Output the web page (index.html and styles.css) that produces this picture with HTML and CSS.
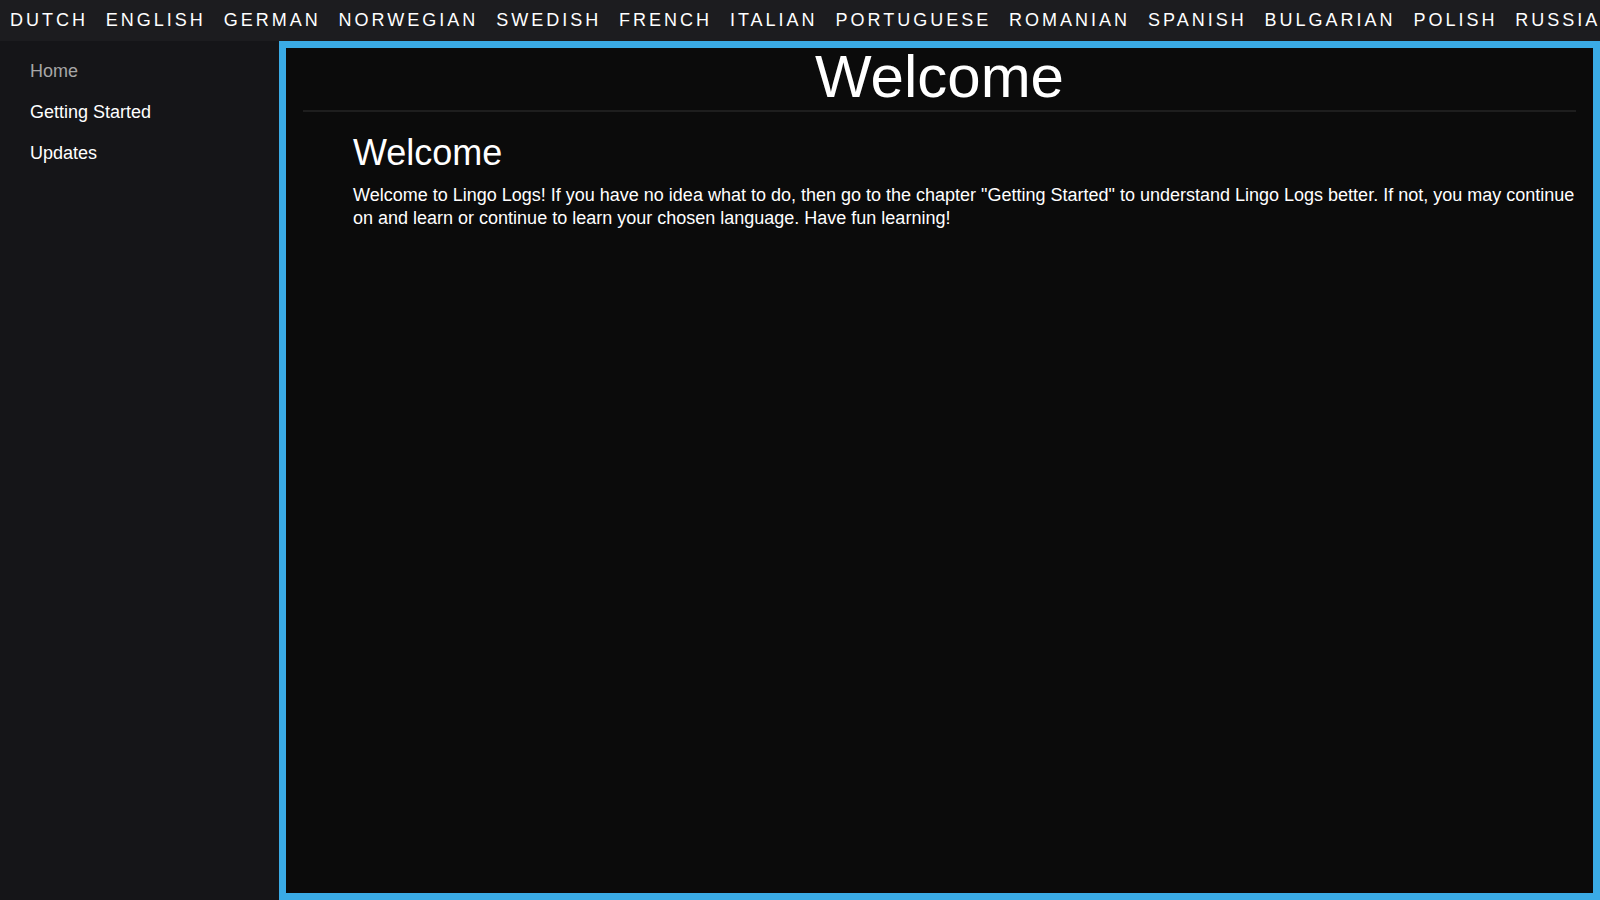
FILE: index.html
```html
<!DOCTYPE html>
<html lang="en">
<head>
<meta charset="utf-8">
<title>Lingo Logs</title>
<link rel="stylesheet" href="styles.css">
</head>
<body>
<nav class="topnav">
  <a class="lang">Dutch</a>
  <a class="lang">English</a>
  <a class="lang">German</a>
  <a class="lang">Norwegian</a>
  <a class="lang">Swedish</a>
  <a class="lang">French</a>
  <a class="lang">Italian</a>
  <a class="lang">Portuguese</a>
  <a class="lang">Romanian</a>
  <a class="lang">Spanish</a>
  <a class="lang">Bulgarian</a>
  <a class="lang">Polish</a>
  <a class="lang">Russian</a>
</nav>
<div class="layout">
  <aside class="sidebar">
    <a class="side-link active">Home</a>
    <a class="side-link">Getting Started</a>
    <a class="side-link">Updates</a>
  </aside>
  <main class="content">
    <header class="page-header">
      <h1 class="page-title">Welcome</h1>
    </header>
    <section class="chapter">
      <h2 class="chapter-title">Welcome</h2>
      <p class="chapter-text">Welcome to Lingo Logs! If you have no idea what to do, then go to the chapter "Getting Started" to understand Lingo Logs better. If not, you may continue on and learn or continue to learn your chosen language. Have fun learning!</p>
    </section>
  </main>
</div>
</body>
</html>
```
FILE: styles.css
```css
html, body {
  margin: 0;
  padding: 0;
  height: 100%;
}
body {
  font-family: "Liberation Sans", Arial, sans-serif;
  background: #151518;
  color: #ffffff;
  overflow: hidden;
}
.topnav {
  display: flex;
  height: 41px;
  box-sizing: border-box;
  padding: 10px 0 0 1px;
  background: #1c1c1f;
  white-space: nowrap;
  overflow: hidden;
}
.lang {
  flex: none;
  padding: 0 8.95px;
  font-size: 18px;
  line-height: 21px;
  letter-spacing: 3px;
  text-transform: uppercase;
  color: #ffffff;
}
.layout {
  display: flex;
  height: calc(100vh - 41px);
}
.sidebar {
  width: 279px;
  flex: none;
  padding-top: 10px;
  box-sizing: border-box;
  background: #151518;
}
.side-link {
  display: block;
  padding: 10px 30px;
  font-size: 18px;
  line-height: 21px;
  color: #ffffff;
}
.side-link.active {
  color: #a6a6a6;
}
.content {
  flex: 1;
  min-width: 0;
  box-sizing: border-box;
  border: 7px solid #3aabe6;
  background: #0b0b0b;
  padding: 0 17px;
}
.page-header {
  border-bottom: 2px solid #1e1e1e;
  padding-bottom: 4px;
}
.page-title {
  margin: 0;
  text-align: center;
  font-size: 60px;
  font-weight: normal;
  line-height: 58px;
}
.chapter {
  padding-left: 50px;
}
.chapter-title {
  margin: 20px 0 0;
  font-size: 36px;
  font-weight: normal;
  line-height: 41px;
}
.chapter-text {
  margin: 11px 0 0;
  font-size: 18px;
  line-height: 23px;
}
```
